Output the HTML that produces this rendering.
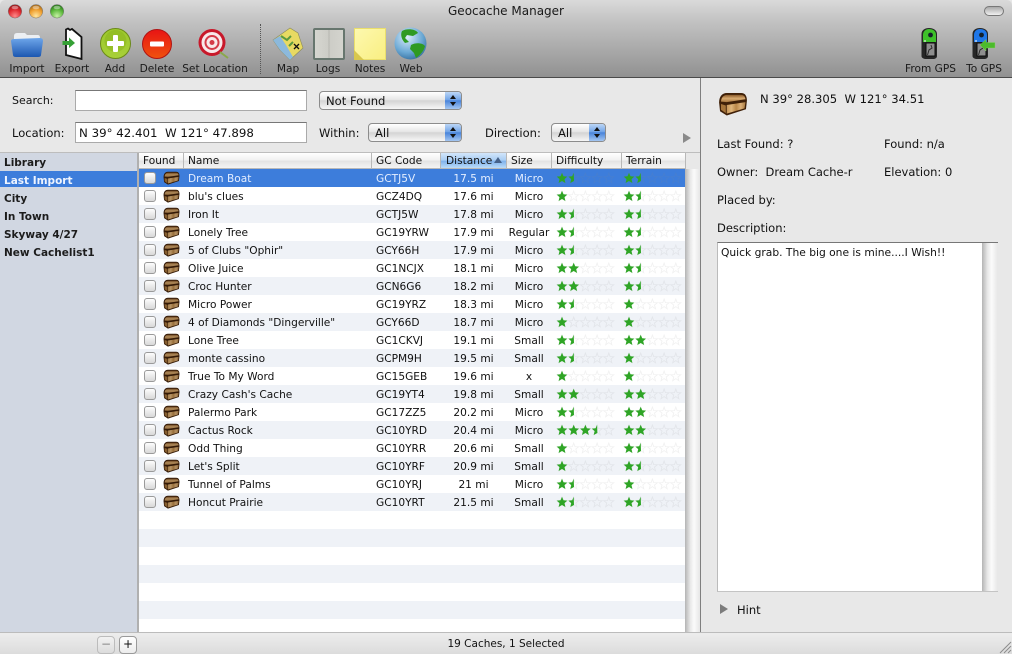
<!DOCTYPE html>
<html><head><meta charset="utf-8"><title>Geocache Manager</title>
<style>
html,body{margin:0;padding:0;width:1012px;height:654px;overflow:hidden;background:#e8e8e8}
body{position:relative;font-family:"DejaVu Sans","Liberation Sans",sans-serif;font-size:11.5px;color:#111}
.t{position:absolute;white-space:nowrap;line-height:14px}
.c{position:absolute;white-space:nowrap;line-height:14px;transform:translateX(-50%)}
.abs{position:absolute}
svg{position:absolute;overflow:visible}
#bar{position:absolute;left:0;top:0;width:1012px;height:77px;background:linear-gradient(#dadada,#c4c4c4 25%,#919191);border-bottom:1px solid #4a4a4a;border-radius:5px 5px 0 0}
.lab{font-size:10.6px;color:#1a1a1a}
.field{position:absolute;left:75px;width:230px;height:19px;background:#fff;border:1px solid #aaa;border-top-color:#777;line-height:20px;font-size:11.8px}
.pop{position:absolute;height:17px;border:1px solid #8c8c8c;border-radius:4px;background:linear-gradient(#fff,#e6e6e6 45%,#d4d4d4 52%,#f6f6f6);line-height:18px;font-size:11.6px;overflow:hidden}
.pop span{position:absolute;left:6px;top:0}
.pop i{position:absolute;right:0;top:0;width:16px;height:17px;background:linear-gradient(#bcd6f6,#74a6e8 45%,#4a84da 52%,#a4c6f2)}
.pop i:before,.pop i:after{content:"";position:absolute;left:5px;border-left:3px solid transparent;border-right:3px solid transparent}
.pop i:before{top:3px;border-bottom:4px solid #111}
.pop i:after{top:10px;border-top:4px solid #111}
.hd{position:absolute;top:153px;height:15px;line-height:17px;font-size:10.6px;background:linear-gradient(#fff,#f2f2f2 45%,#e4e4e4 55%,#f4f4f4);border-right:1px solid #b8b8b8;border-bottom:1px solid #b8b8b8}
.hd span{position:absolute;left:4px;top:0;white-space:nowrap}
.r{position:absolute;left:139px;width:546px;height:18px;line-height:18px;font-size:10.6px;color:#111}
.st{background:#eff2f7}
.sel{background:#3d7ddb;color:#e4eeff}
.r span{position:absolute;white-space:nowrap;top:1px}
.n{left:49px}
.g{left:237px}
.d{left:334.500px;transform:translateX(-50%)}
.z{left:390px;transform:translateX(-50%)}
.k{position:absolute;left:5px;top:3px;width:10px;height:10px;border:1px solid #9a9a9a;border-radius:3px;background:linear-gradient(#fdfdfd,#d8d8d8)}
.h{left:24px;top:2px;width:17px;height:14px;filter:brightness(.82)}
.a{left:418px;top:4px;width:60px;height:11px}
.b{left:485px;top:4px;width:60px;height:11px}
.sb{position:absolute;left:4px;font-weight:bold;font-size:10.5px;line-height:20px;height:18px;white-space:nowrap;color:#1c1c1c}
</style></head>
<body>
<svg width="0" height="0" style="position:absolute"><defs>
<linearGradient id="lid" x1="0" y1="0" x2="0" y2="1"><stop offset="0" stop-color="#8a5a2a"/><stop offset=".5" stop-color="#d8ab70"/><stop offset="1" stop-color="#a87840"/></linearGradient>
<linearGradient id="frt" x1="0" y1="0" x2="1" y2="0"><stop offset="0" stop-color="#c69658"/><stop offset=".25" stop-color="#e0b67c"/><stop offset=".5" stop-color="#b98748"/><stop offset=".75" stop-color="#dcb078"/><stop offset="1" stop-color="#a87a40"/></linearGradient>
<g id="c"><path d="M1 11 C1 5 4 1 9 1 L24 1 C28 1 30 4 30 9 L29 18 L9 24.500 L2 20Z" fill="#3f2008"/><path d="M3 10 C3 6 6 3 9 3 L24 3 C27 3 28 5 28.500 7.500 L9 10.500Z" fill="url(#lid)"/><path d="M9 13.500 L28.500 10.500 L27.500 17 L9 22.500Z" fill="url(#frt)"/><path d="M3 12.500 L8 14 L8 22 L3 18.500Z" fill="#a5743a"/></g>
<polygon id="s" points="5,-.2 6.500,3.300 10.300,3.600 7.500,6.100 8.400,10 5,8 1.600,10 2.500,6.100 -.3,3.600 3.500,3.300" fill="#2fa526"/>
<polygon id="sh" points="5,-.2 5.300,8 1.600,10 2.500,6.100 -.3,3.600 3.500,3.300" fill="#2fa526"/>
<polygon id="se" points="5,0 6.300,3.600 10,3.700 7.100,6 8.100,9.800 5,7.600 1.900,9.800 2.900,6 0,3.700 3.700,3.600" fill="none" stroke="#8a8a8a" stroke-opacity=".13" stroke-width=".8"/>
<g id="e"><use href="#se"/><use href="#se" x="11.700"/><use href="#se" x="23.400"/><use href="#se" x="35.100"/><use href="#se" x="46.800"/></g>
<g id="r1"><use href="#e"/><use href="#s"/></g>
<g id="r15"><use href="#e"/><use href="#s"/><use href="#sh" x="11.700"/></g>
<g id="r2"><use href="#e"/><use href="#s"/><use href="#s" x="11.700"/></g>
<g id="r35"><use href="#e"/><use href="#s"/><use href="#s" x="11.700"/><use href="#s" x="23.400"/><use href="#sh" x="35.100"/></g>
<radialGradient id="gr" cx=".5" cy=".85" r=".8"><stop offset="0" stop-color="#ff8a8a"/><stop offset=".6" stop-color="#e02a30"/><stop offset="1" stop-color="#9c1418"/></radialGradient>
<radialGradient id="gy" cx=".5" cy=".85" r=".8"><stop offset="0" stop-color="#ffe6a0"/><stop offset=".6" stop-color="#f0a030"/><stop offset="1" stop-color="#a86c1c"/></radialGradient>
<radialGradient id="gg" cx=".5" cy=".85" r=".8"><stop offset="0" stop-color="#c6f2a4"/><stop offset=".6" stop-color="#5cb83c"/><stop offset="1" stop-color="#2a7a1c"/></radialGradient>
<linearGradient id="fold" x1="0" y1="0" x2="0" y2="1"><stop offset="0" stop-color="#6ea6ea"/><stop offset="1" stop-color="#1c57b0"/></linearGradient>
<linearGradient id="add" x1="0" y1="0" x2="0" y2="1"><stop offset="0" stop-color="#9cc82c"/><stop offset="1" stop-color="#a8d038"/></linearGradient>
<linearGradient id="del" x1="0" y1="0" x2="0" y2="1"><stop offset="0" stop-color="#e81414"/><stop offset="1" stop-color="#f0520e"/></linearGradient>
<radialGradient id="globe" cx=".4" cy=".3" r=".8"><stop offset="0" stop-color="#dcecf8"/><stop offset=".6" stop-color="#6aa8d4"/><stop offset="1" stop-color="#2c6494"/></radialGradient>
<g id="gps"><path d="M0.500 6 C0.500 2 4 0 8 0 C12 0 16 2 16 6 L16 28 C16 30 14 31 12 31 L5 31 C3 31 0.500 30 0.500 28Z" fill="#262626"/><path d="M2 7 C2 3 5 1 8 1 C12 1 15 3 15 7 L15 14 L2 14Z" fill="currentColor"/><path d="M5 15 L14 15 L14 28 L5 28Z" fill="#8e8e8e" stroke="#0c0c0c"/><path d="M6.500 27 L8 22 L11 20 L10 17" stroke="#2a2a2a" fill="none"/><circle cx="9.500" cy="7" r="2.400" fill="#14202a"/><rect x="3" y="12.500" width="2" height="1" fill="#fff"/></g>
</defs></svg>

<div id="bar"></div>
<svg style="left:8px;top:4px" width="60" height="16">
<circle cx="7" cy="7.300" r="6.800" fill="url(#gr)" stroke="#777" stroke-width=".5"/><ellipse cx="7" cy="3.500" rx="3.400" ry="1.800" fill="#fff" fill-opacity=".4"/>
<circle cx="28" cy="7.300" r="6.800" fill="url(#gy)" stroke="#777" stroke-width=".5"/><ellipse cx="28" cy="3.500" rx="3.400" ry="1.800" fill="#fff" fill-opacity=".4"/>
<circle cx="49" cy="7.300" r="6.800" fill="url(#gg)" stroke="#777" stroke-width=".5"/><ellipse cx="49" cy="3.500" rx="3.400" ry="1.800" fill="#fff" fill-opacity=".4"/>
</svg>
<div class="c" style="left:506px;top:4px;font-size:12px;color:#1a1a1a">Geocache Manager</div>
<div class="abs" style="left:984px;top:6px;width:18px;height:8px;border:1px solid #777;border-radius:5px;background:linear-gradient(#a8a8a8,#f0f0f0)"></div>

<!-- Toolbar icons -->
<svg style="left:11px;top:31px" width="32" height="27"><path d="M3 5 Q3 2 6 2 L14 2 L16 4 L27 4 Q29 4 29 7 L29 12 L3 12Z" fill="#eceff3"/><path d="M0 10 Q0 8 3 8 L29 7 Q32 7 32 10 L30 24 Q30 26 27 26 L5 26 Q2 26 2 24Z" fill="url(#fold)"/></svg>
<svg style="left:62px;top:28px" width="22" height="33"><path d="M4 1.500 L6 0.500 L8 2 L10 1 L19.500 9 L19.500 31 L4 27Z" fill="#fff" stroke="#111" stroke-width="1.800"/><path d="M0.500 13 L7 13 L7 9.500 L13 15 L7 20 L7 17 L0.500 17Z" fill="#35a035"/></svg>
<svg style="left:100px;top:28px" width="32" height="32"><circle cx="15.500" cy="15.500" r="15" fill="url(#add)" stroke="#6b8a18"/><circle cx="15.500" cy="13" r="11" fill="#8ab41e" fill-opacity=".55"/><rect x="13" y="7" width="5" height="17" rx="1" fill="#fff"/><rect x="7" y="13" width="17" height="5" rx="1" fill="#fff"/></svg>
<svg style="left:142px;top:29px" width="30" height="30"><circle cx="15" cy="15" r="14.500" fill="url(#del)" stroke="#b01414"/><rect x="8" y="12.500" width="14" height="5" rx="1" fill="#fff"/></svg>
<svg style="left:199px;top:29px" width="32" height="32"><circle cx="13" cy="13.500" r="13.500" fill="#c8182a"/><circle cx="13" cy="13.500" r="10.500" fill="#f8e8ea"/><circle cx="13" cy="13.500" r="7.500" fill="#d43a48"/><circle cx="13" cy="13.500" r="5.500" fill="#f8e8ea"/><circle cx="13" cy="13.500" r="2.500" fill="#d43a48"/><path d="M21 23 L29 29" stroke="#8aa84a" stroke-width="2"/></svg>
<div class="abs" style="left:260px;top:24px;width:0;height:50px;border-left:1px dotted #555"></div>
<svg style="left:273px;top:28px" width="32" height="33"><path d="M0 12 L17 0 L25 5 L30 20 L17 32 L7 22Z" fill="#e8da62" stroke="#8a8a5a" stroke-width=".6"/><path d="M0 12 L7 8 L13 17 L20 29 L17 32 L7 22Z" fill="#8cb9dc"/><path d="M8 8 L14 12 L18 8 M16 18 L20 14" stroke="#5a9a3f" stroke-width="2" fill="none"/><path d="M21 16 L26 21 M26 16 L21 21" stroke="#111" stroke-width="1.300"/></svg>
<div class="abs" style="left:313px;top:28px;width:28px;height:28px;border:2px solid #67766e;border-radius:2px;background:linear-gradient(90deg,#d6d6d0,#cdcdc7 46%,#b8b8b2 50%,#cdcdc7 54%,#d4d4ce)"></div>
<div class="abs" style="left:354px;top:28px;width:32px;height:32px;background:linear-gradient(135deg,#fdf9b0,#f9ee80);box-shadow:inset 0 0 0 1px #eade6c"></div>
<svg style="left:354px;top:50px" width="11" height="10"><path d="M0 0 L10 10 L0 10Z" fill="#d8c74e"/></svg>
<svg style="left:394px;top:27px" width="33" height="33"><circle cx="16.500" cy="16.500" r="16" fill="url(#globe)"/><path d="M8 4 C13 1 22 2 24 6 L19 9 L13 8 L11 11 L15 15 L11 16 C8 13 6 8 8 4Z M17 18 C22 15 29 16 31 19 C30 24 26 28 22 31 L20 26 L16 22Z" fill="#2f9a22"/></svg>
<svg style="left:921px;top:28px;color:#3ec22a" width="18" height="32"><use href="#gps"/></svg>
<svg style="left:972px;top:28px;color:#1f77e8" width="26" height="32"><use href="#gps"/><path d="M8 17 L14 11.500 L14 14.500 L23 14.500 L23 20 L14 20 L14 23Z" fill="#4cbb2c" stroke="#8fd070" stroke-width=".4"/></svg>

<div class="c lab" style="left:27px;top:62px">Import</div>
<div class="c lab" style="left:72px;top:62px">Export</div>
<div class="c lab" style="left:115px;top:62px">Add</div>
<div class="c lab" style="left:157px;top:62px">Delete</div>
<div class="c lab" style="left:215px;top:62px">Set Location</div>
<div class="c lab" style="left:288px;top:62px">Map</div>
<div class="c lab" style="left:328px;top:62px">Logs</div>
<div class="c lab" style="left:370px;top:62px">Notes</div>
<div class="c lab" style="left:411px;top:62px">Web</div>
<div class="c lab" style="left:930.500px;top:62px">From GPS</div>
<div class="c lab" style="left:984px;top:62px">To GPS</div>

<!-- Search area -->
<div class="t" style="left:12px;top:94px;font-size:11px">Search:</div>
<div class="field" style="top:90px"></div>
<div class="pop" style="left:319px;top:91px;width:141px"><span>Not Found</span><i></i></div>
<div class="t" style="left:12px;top:126px">Location:</div>
<div class="field" style="top:122px"><span style="position:absolute;left:3px;white-space:nowrap">N 39° 42.401&nbsp; W 121° 47.898</span></div>
<div class="t" style="left:319px;top:126px">Within:</div>
<div class="pop" style="left:368px;top:123px;width:92px"><span>All</span><i></i></div>
<div class="t" style="left:485px;top:126px">Direction:</div>
<div class="pop" style="left:551px;top:123px;width:53px"><span>All</span><i></i></div>
<div class="abs" style="left:683px;top:133px;width:0;height:0;border-left:8px solid #8a8a8a;border-top:5px solid transparent;border-bottom:5px solid transparent"></div>

<!-- Sidebar -->
<div class="abs" style="left:0;top:152px;width:700px;height:1px;background:#bdbdbd"></div>
<div class="abs" style="left:0;top:153px;width:137px;height:479px;background:#d1d7e2;border-right:2px solid #b0b0b0"></div>
<div class="abs" style="left:0;top:171px;width:137px;height:16px;background:#3d7ddb"></div>
<div class="sb" style="top:153px">Library</div>
<div class="sb" style="top:171px;color:#eef4ff">Last Import</div>
<div class="sb" style="top:189px">City</div>
<div class="sb" style="top:207px">In Town</div>
<div class="sb" style="top:225px">Skyway 4/27</div>
<div class="sb" style="top:243px">New Cachelist1</div>

<!-- Table -->
<div class="abs" style="left:139px;top:169px;width:546px;height:463px;background:#fff"></div>
<div class="hd" style="left:139px;width:44px"><span>Found</span></div>
<div class="hd" style="left:184px;width:187px"><span>Name</span></div>
<div class="hd" style="left:372px;width:68px"><span>GC Code</span></div>
<div class="hd" style="left:441px;width:65px;background:linear-gradient(#d3e6fb,#a9cdf3 48%,#7fb2ec 54%,#bcdcf8)"><span style="left:5px">Distance</span><b style="position:absolute;left:53px;top:4px;width:0;height:0;border-left:4px solid transparent;border-right:4px solid transparent;border-bottom:6px solid #46628a"></b></div>
<div class="hd" style="left:507px;width:44px"><span>Size</span></div>
<div class="hd" style="left:552px;width:69px"><span>Difficulty</span></div>
<div class="hd" style="left:622px;width:63px"><span>Terrain</span></div>

<div class="r sel" style="top:169px"><i class="k"></i><svg class="h" viewBox="0 0 31 25"><use href="#c"/></svg><span class="n">Dream Boat</span><span class="g">GCTJ5V</span><span class="d">17.5 mi</span><span class="z">Micro</span><svg class="a"><use href="#r15"/></svg><svg class="b"><use href="#r15"/></svg></div>
<div class="r" style="top:187px"><i class="k"></i><svg class="h" viewBox="0 0 31 25"><use href="#c"/></svg><span class="n">blu's clues</span><span class="g">GCZ4DQ</span><span class="d">17.6 mi</span><span class="z">Micro</span><svg class="a"><use href="#r1"/></svg><svg class="b"><use href="#r15"/></svg></div>
<div class="r st" style="top:205px"><i class="k"></i><svg class="h" viewBox="0 0 31 25"><use href="#c"/></svg><span class="n">Iron It</span><span class="g">GCTJ5W</span><span class="d">17.8 mi</span><span class="z">Micro</span><svg class="a"><use href="#r15"/></svg><svg class="b"><use href="#r15"/></svg></div>
<div class="r" style="top:223px"><i class="k"></i><svg class="h" viewBox="0 0 31 25"><use href="#c"/></svg><span class="n">Lonely Tree</span><span class="g">GC19YRW</span><span class="d">17.9 mi</span><span class="z">Regular</span><svg class="a"><use href="#r15"/></svg><svg class="b"><use href="#r15"/></svg></div>
<div class="r st" style="top:241px"><i class="k"></i><svg class="h" viewBox="0 0 31 25"><use href="#c"/></svg><span class="n">5 of Clubs "Ophir"</span><span class="g">GCY66H</span><span class="d">17.9 mi</span><span class="z">Micro</span><svg class="a"><use href="#r15"/></svg><svg class="b"><use href="#r15"/></svg></div>
<div class="r" style="top:259px"><i class="k"></i><svg class="h" viewBox="0 0 31 25"><use href="#c"/></svg><span class="n">Olive Juice</span><span class="g">GC1NCJX</span><span class="d">18.1 mi</span><span class="z">Micro</span><svg class="a"><use href="#r2"/></svg><svg class="b"><use href="#r15"/></svg></div>
<div class="r st" style="top:277px"><i class="k"></i><svg class="h" viewBox="0 0 31 25"><use href="#c"/></svg><span class="n">Croc Hunter</span><span class="g">GCN6G6</span><span class="d">18.2 mi</span><span class="z">Micro</span><svg class="a"><use href="#r2"/></svg><svg class="b"><use href="#r15"/></svg></div>
<div class="r" style="top:295px"><i class="k"></i><svg class="h" viewBox="0 0 31 25"><use href="#c"/></svg><span class="n">Micro Power</span><span class="g">GC19YRZ</span><span class="d">18.3 mi</span><span class="z">Micro</span><svg class="a"><use href="#r15"/></svg><svg class="b"><use href="#r1"/></svg></div>
<div class="r st" style="top:313px"><i class="k"></i><svg class="h" viewBox="0 0 31 25"><use href="#c"/></svg><span class="n">4 of Diamonds "Dingerville"</span><span class="g">GCY66D</span><span class="d">18.7 mi</span><span class="z">Micro</span><svg class="a"><use href="#r1"/></svg><svg class="b"><use href="#r1"/></svg></div>
<div class="r" style="top:331px"><i class="k"></i><svg class="h" viewBox="0 0 31 25"><use href="#c"/></svg><span class="n">Lone Tree</span><span class="g">GC1CKVJ</span><span class="d">19.1 mi</span><span class="z">Small</span><svg class="a"><use href="#r15"/></svg><svg class="b"><use href="#r2"/></svg></div>
<div class="r st" style="top:349px"><i class="k"></i><svg class="h" viewBox="0 0 31 25"><use href="#c"/></svg><span class="n">monte cassino</span><span class="g">GCPM9H</span><span class="d">19.5 mi</span><span class="z">Small</span><svg class="a"><use href="#r15"/></svg><svg class="b"><use href="#r1"/></svg></div>
<div class="r" style="top:367px"><i class="k"></i><svg class="h" viewBox="0 0 31 25"><use href="#c"/></svg><span class="n">True To My Word</span><span class="g">GC15GEB</span><span class="d">19.6 mi</span><span class="z">x</span><svg class="a"><use href="#r1"/></svg><svg class="b"><use href="#r1"/></svg></div>
<div class="r st" style="top:385px"><i class="k"></i><svg class="h" viewBox="0 0 31 25"><use href="#c"/></svg><span class="n">Crazy Cash's Cache</span><span class="g">GC19YT4</span><span class="d">19.8 mi</span><span class="z">Small</span><svg class="a"><use href="#r2"/></svg><svg class="b"><use href="#r2"/></svg></div>
<div class="r" style="top:403px"><i class="k"></i><svg class="h" viewBox="0 0 31 25"><use href="#c"/></svg><span class="n">Palermo Park</span><span class="g">GC17ZZ5</span><span class="d">20.2 mi</span><span class="z">Micro</span><svg class="a"><use href="#r15"/></svg><svg class="b"><use href="#r2"/></svg></div>
<div class="r st" style="top:421px"><i class="k"></i><svg class="h" viewBox="0 0 31 25"><use href="#c"/></svg><span class="n">Cactus Rock</span><span class="g">GC10YRD</span><span class="d">20.4 mi</span><span class="z">Micro</span><svg class="a"><use href="#r35"/></svg><svg class="b"><use href="#r2"/></svg></div>
<div class="r" style="top:439px"><i class="k"></i><svg class="h" viewBox="0 0 31 25"><use href="#c"/></svg><span class="n">Odd Thing</span><span class="g">GC10YRR</span><span class="d">20.6 mi</span><span class="z">Small</span><svg class="a"><use href="#r1"/></svg><svg class="b"><use href="#r15"/></svg></div>
<div class="r st" style="top:457px"><i class="k"></i><svg class="h" viewBox="0 0 31 25"><use href="#c"/></svg><span class="n">Let's Split</span><span class="g">GC10YRF</span><span class="d">20.9 mi</span><span class="z">Small</span><svg class="a"><use href="#r1"/></svg><svg class="b"><use href="#r15"/></svg></div>
<div class="r" style="top:475px"><i class="k"></i><svg class="h" viewBox="0 0 31 25"><use href="#c"/></svg><span class="n">Tunnel of Palms</span><span class="g">GC10YRJ</span><span class="d">21 mi</span><span class="z">Micro</span><svg class="a"><use href="#r15"/></svg><svg class="b"><use href="#r1"/></svg></div>
<div class="r st" style="top:493px"><i class="k"></i><svg class="h" viewBox="0 0 31 25"><use href="#c"/></svg><span class="n">Honcut Prairie</span><span class="g">GC10YRT</span><span class="d">21.5 mi</span><span class="z">Small</span><svg class="a"><use href="#r15"/></svg><svg class="b"><use href="#r15"/></svg></div>
<div class="r st" style="top:529px"></div>
<div class="r st" style="top:565px"></div>
<div class="r st" style="top:601px"></div>

<!-- Table scrollbar -->
<div class="abs" style="left:685px;top:169px;width:15px;height:463px;background:linear-gradient(90deg,#b4b4b4,#e8e8e8 35%,#fbfbfb 60%,#e6e6e6)"></div>
<div class="abs" style="left:700px;top:78px;width:1px;height:554px;background:#7f7f7f"></div>

<!-- Detail panel -->
<svg style="left:718px;top:92px" width="30" height="24" viewBox="0 0 31 25"><use href="#c"/></svg>
<div class="t" style="left:760px;top:92px;font-size:11.600px">N 39° 28.305&nbsp; W 121° 34.51</div>
<div class="t" style="left:717px;top:137px">Last Found: ?</div>
<div class="t" style="left:884px;top:137px">Found: n/a</div>
<div class="t" style="left:717px;top:165px">Owner:&nbsp; Dream Cache-r</div>
<div class="t" style="left:884px;top:165px">Elevation: 0</div>
<div class="t" style="left:717px;top:193px">Placed by:</div>
<div class="t" style="left:717px;top:221px">Description:</div>
<div class="abs" style="left:717px;top:242px;width:281px;height:350px;background:#fff;border-top:1px solid #777;border-bottom:1px solid #c4c4c4;border-left:1px solid #bbb;box-sizing:border-box"></div>
<div class="t" style="left:721px;top:246px;font-size:10.700px">Quick grab. The big one is mine....I Wish!!</div>
<div class="abs" style="left:982px;top:243px;width:16px;height:348px;background:linear-gradient(90deg,#b4b4b4,#e8e8e8 35%,#fbfbfb 60%,#e6e6e6)"></div>
<div class="abs" style="left:720px;top:604px;width:0;height:0;border-left:8px solid #7c7c7c;border-top:5px solid transparent;border-bottom:5px solid transparent"></div>
<div class="t" style="left:737px;top:603px">Hint</div>

<!-- Status bar -->
<div class="abs" style="left:0;top:632px;width:1012px;height:1px;background:#bcbcbc"></div>
<div class="abs" style="left:0;top:633px;width:1012px;height:21px;background:linear-gradient(#ededed,#dcdcdc)"></div>
<div class="abs" style="left:97px;top:636px;width:16px;height:16px;border:1px solid #bcbcbc;border-radius:4px;background:linear-gradient(#f2f2f2,#dcdcdc);color:#888;text-align:center;line-height:15px;font-size:12px">−</div>
<div class="abs" style="left:119px;top:636px;width:16px;height:16px;border:1px solid #9a9a9a;border-radius:4px;background:linear-gradient(#fff,#ececec);color:#111;text-align:center;line-height:15px;font-size:12px">+</div>
<div class="c" style="left:506px;top:637px;font-size:10.500px">19 Caches, 1 Selected</div>
<svg style="left:999px;top:641px" width="13" height="13"><path d="M1 12 L12 1 M5 12 L12 5 M9 12 L12 9" stroke="#8c8c8c" fill="none"/></svg>
</body></html>
